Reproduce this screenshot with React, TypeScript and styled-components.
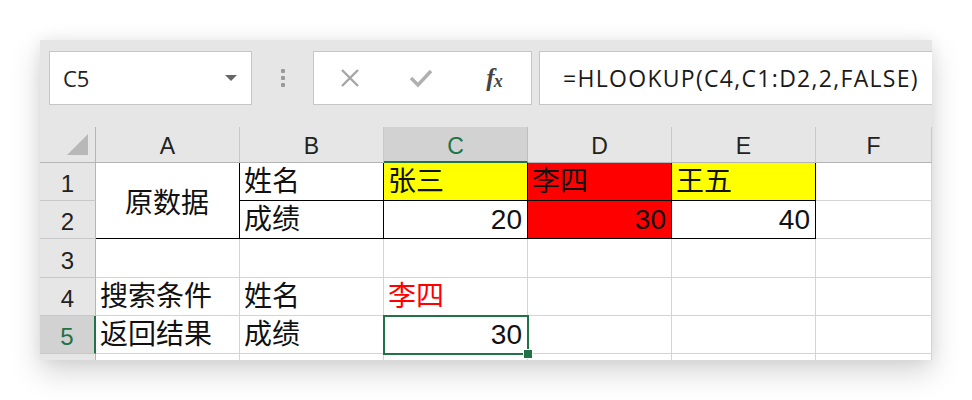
import React from "react";
import styled, { createGlobalStyle } from "styled-components";

const Global = createGlobalStyle`
  html, body { margin: 0; padding: 0; background: #ffffff; }
  body { font-family: "Liberation Sans", "Noto Sans CJK SC", sans-serif; }
`;

const GREEN = "#217346";
const GRID = "#d4d4d4";

const Page = styled.div`
  width: 972px;
  height: 400px;
  padding: 40px 0 0 40px;
  box-sizing: border-box;
`;

const Card = styled.div`
  width: 892px;
  height: 320px;
  overflow: hidden;
  background: #ffffff;
  box-shadow: 0 12px 28px rgba(0, 0, 0, 0.17), 0 0 14px rgba(0, 0, 0, 0.06);
`;

const Toolbar = styled.div`
  height: 87px;
  background: #e6e6e6;
  display: flex;
  align-items: flex-start;
  padding: 11px 0 0 9px;
  box-sizing: border-box;
`;

const Box = styled.div<{ $w: number }>`
  width: ${(p) => p.$w}px;
  height: 54px;
  flex: none;
  background: #ffffff;
  border: 1px solid #c6c6c6;
  box-sizing: border-box;
  display: flex;
  align-items: center;
  position: relative;
`;

const NameText = styled.span`
  font-family: "Open Sans", "Liberation Sans", sans-serif;
  font-size: 22px;
  color: #222;
  padding-left: 13px;
  flex: 1;
`;

const Caret = styled.span`
  width: 0;
  height: 0;
  border-left: 6px solid transparent;
  border-right: 6px solid transparent;
  border-top: 6px solid #666;
  margin-right: 14px;
`;

const Dots = styled.div`
  width: 61px;
  flex: none;
  height: 54px;
  display: flex;
  flex-direction: column;
  align-items: center;
  justify-content: center;
  gap: 3px;
  span {
    width: 4px;
    height: 4px;
    background: #9a9a9a;
    border-radius: 1px;
  }
`;

const IconSlot = styled.div<{ $w: number }>`
  width: ${(p) => p.$w}px;
  display: flex;
  justify-content: center;
  align-items: center;
  flex: none;
`;

const Fx = styled.span`
  font-family: "Liberation Serif", serif;
  font-style: italic;
  font-weight: bold;
  font-size: 25px;
  color: #444;
  letter-spacing: -1px;
  sub {
    font-size: 18px;
    vertical-align: -1px;
  }
`;

const Gap = styled.div`
  width: 7px;
  flex: none;
`;

const FormulaText = styled.span`
  font-family: "Open Sans", "Liberation Sans", sans-serif;
  font-size: 23px;
  letter-spacing: 1.3px;
  color: #1a1a1a;
  padding-left: 23px;
  white-space: nowrap;
`;

const Sheet = styled.div`
  display: grid;
  grid-template-columns: 56px 144px 144px 144px 144px 144px 1fr;
  grid-template-rows: 36px 38px 38px 39px 38px 38px 38px;
  background: #ffffff;
`;

const ColHead = styled.div<{ $sel?: boolean }>`
  background: ${(p) => (p.$sel ? "#d2d2d2" : "#e6e6e6")};
  border-right: 1px solid ${(p) => (p.$sel ? "#bdbdbd" : "#c8c8c8")};
  border-bottom: ${(p) => (p.$sel ? `2px solid ${GREEN}` : "1px solid #b5b5b5")};
  box-sizing: border-box;
  display: flex;
  align-items: center;
  justify-content: center;
  padding-top: 4px;
  font-family: "Liberation Sans", sans-serif;
  font-size: 23px;
  color: ${(p) => (p.$sel ? GREEN : "#222")};
`;

const Corner = styled.div`
  background: #e6e6e6;
  border-right: 1px solid #b5b5b5;
  border-bottom: 1px solid #b5b5b5;
  box-sizing: border-box;
  display: flex;
  align-items: flex-end;
  justify-content: flex-end;
  padding: 0 7px 7px 0;
`;

const Tri = styled.div`
  width: 0;
  height: 0;
  border-left: 21px solid transparent;
  border-bottom: 21px solid #b8b8b8;
`;

const RowHead = styled.div<{ $sel?: boolean }>`
  background: ${(p) => (p.$sel ? "#d2d2d2" : "#e6e6e6")};
  border-right: ${(p) => (p.$sel ? `2px solid ${GREEN}` : "1px solid #b5b5b5")};
  border-bottom: 1px solid #c8c8c8;
  box-sizing: border-box;
  display: flex;
  align-items: flex-end;
  justify-content: center;
  padding-bottom: 2px;
  font-family: "Liberation Sans", sans-serif;
  font-size: 24px;
  color: ${(p) => (p.$sel ? GREEN : "#222")};
`;

type CellProps = {
  $bg?: string;
  $color?: string;
  $align?: "left" | "right" | "center";
  $br?: boolean;
  $bb?: boolean;
  $span?: number;
  $sel?: boolean;
};

const Cell = styled.div<CellProps>`
  position: relative;
  background: ${(p) => p.$bg || "#ffffff"};
  color: ${(p) => p.$color || "#111"};
  border-right: 1px solid ${(p) => (p.$br ? "#000" : GRID)};
  border-bottom: 1px solid ${(p) => (p.$bb ? "#000" : GRID)};
  box-sizing: border-box;
  display: flex;
  align-items: ${(p) => (p.$align === "center" ? "center" : "flex-end")};
  justify-content: ${(p) =>
    p.$align === "right" ? "flex-end" : p.$align === "center" ? "center" : "flex-start"};
  padding: ${(p) => (p.$align === "center" ? "6px 5px 0 4px" : "0 5px 1px 4px")};
  font-size: 28px;
  line-height: 34px;
  white-space: nowrap;
  ${(p) => (p.$span ? `grid-row: span ${p.$span};` : "")}
  ${(p) =>
    p.$sel
      ? `outline: 2px solid ${GREEN}; outline-offset: -1px; z-index: 1;`
      : ""}
`;

const Handle = styled.span`
  position: absolute;
  right: -6px;
  bottom: -6px;
  width: 8px;
  height: 8px;
  background: ${GREEN};
  border: 1px solid #ffffff;
  z-index: 2;
`;

const XIcon = () => (
  <svg width="22" height="22" viewBox="0 0 22 22">
    <path d="M3 3 L19 19 M19 3 L3 19" stroke="#a6a6a6" strokeWidth="2.4" fill="none" />
  </svg>
);

const CheckIcon = () => (
  <svg width="24" height="22" viewBox="0 0 24 22">
    <path d="M2 11 L9 18 L22 4" stroke="#b0b0b0" strokeWidth="3.4" fill="none" />
  </svg>
);

const cols = ["A", "B", "C", "D", "E", "F"];

export default function App() {
  return (
    <Page>
      <Global />
      <Card>
        <Toolbar>
          <Box $w={203}>
            <NameText>C5</NameText>
            <Caret />
          </Box>
          <Dots>
            <span />
            <span />
            <span />
          </Dots>
          <Box $w={219}>
            <IconSlot $w={72}>
              <XIcon />
            </IconSlot>
            <IconSlot $w={70}>
              <CheckIcon />
            </IconSlot>
            <IconSlot $w={76}>
              <Fx>
                f<sub>x</sub>
              </Fx>
            </IconSlot>
          </Box>
          <Gap />
          <Box $w={420}>
            <FormulaText>=HLOOKUP(C4,C1:D2,2,FALSE)</FormulaText>
          </Box>
        </Toolbar>
        <Sheet>
          <Corner>
            <Tri />
          </Corner>
          {cols.map((c) => (
            <ColHead key={c} $sel={c === "C"}>
              {c}
            </ColHead>
          ))}

          <RowHead>1</RowHead>
          <Cell $span={2} $align="center" $br $bb>
            原数据
          </Cell>
          <Cell $br $bb>姓名</Cell>
          <Cell $bg="#ffff00" $br $bb>张三</Cell>
          <Cell $bg="#ff0000" $br $bb>李四</Cell>
          <Cell $bg="#ffff00" $br $bb>王五</Cell>
          <Cell />

          <RowHead>2</RowHead>
          <Cell $br $bb>成绩</Cell>
          <Cell $align="right" $br $bb>20</Cell>
          <Cell $bg="#ff0000" $align="right" $br $bb>30</Cell>
          <Cell $align="right" $br $bb>40</Cell>
          <Cell />

          <RowHead>3</RowHead>
          <Cell />
          <Cell />
          <Cell />
          <Cell />
          <Cell />
          <Cell />

          <RowHead>4</RowHead>
          <Cell>搜索条件</Cell>
          <Cell>姓名</Cell>
          <Cell $color="#ff0000">李四</Cell>
          <Cell />
          <Cell />
          <Cell />

          <RowHead $sel>5</RowHead>
          <Cell>返回结果</Cell>
          <Cell>成绩</Cell>
          <Cell $align="right" $sel>
            30
            <Handle />
          </Cell>
          <Cell />
          <Cell />
          <Cell />

          <RowHead />
          <Cell />
          <Cell />
          <Cell />
          <Cell />
          <Cell />
          <Cell />
        </Sheet>
      </Card>
    </Page>
  );
}
